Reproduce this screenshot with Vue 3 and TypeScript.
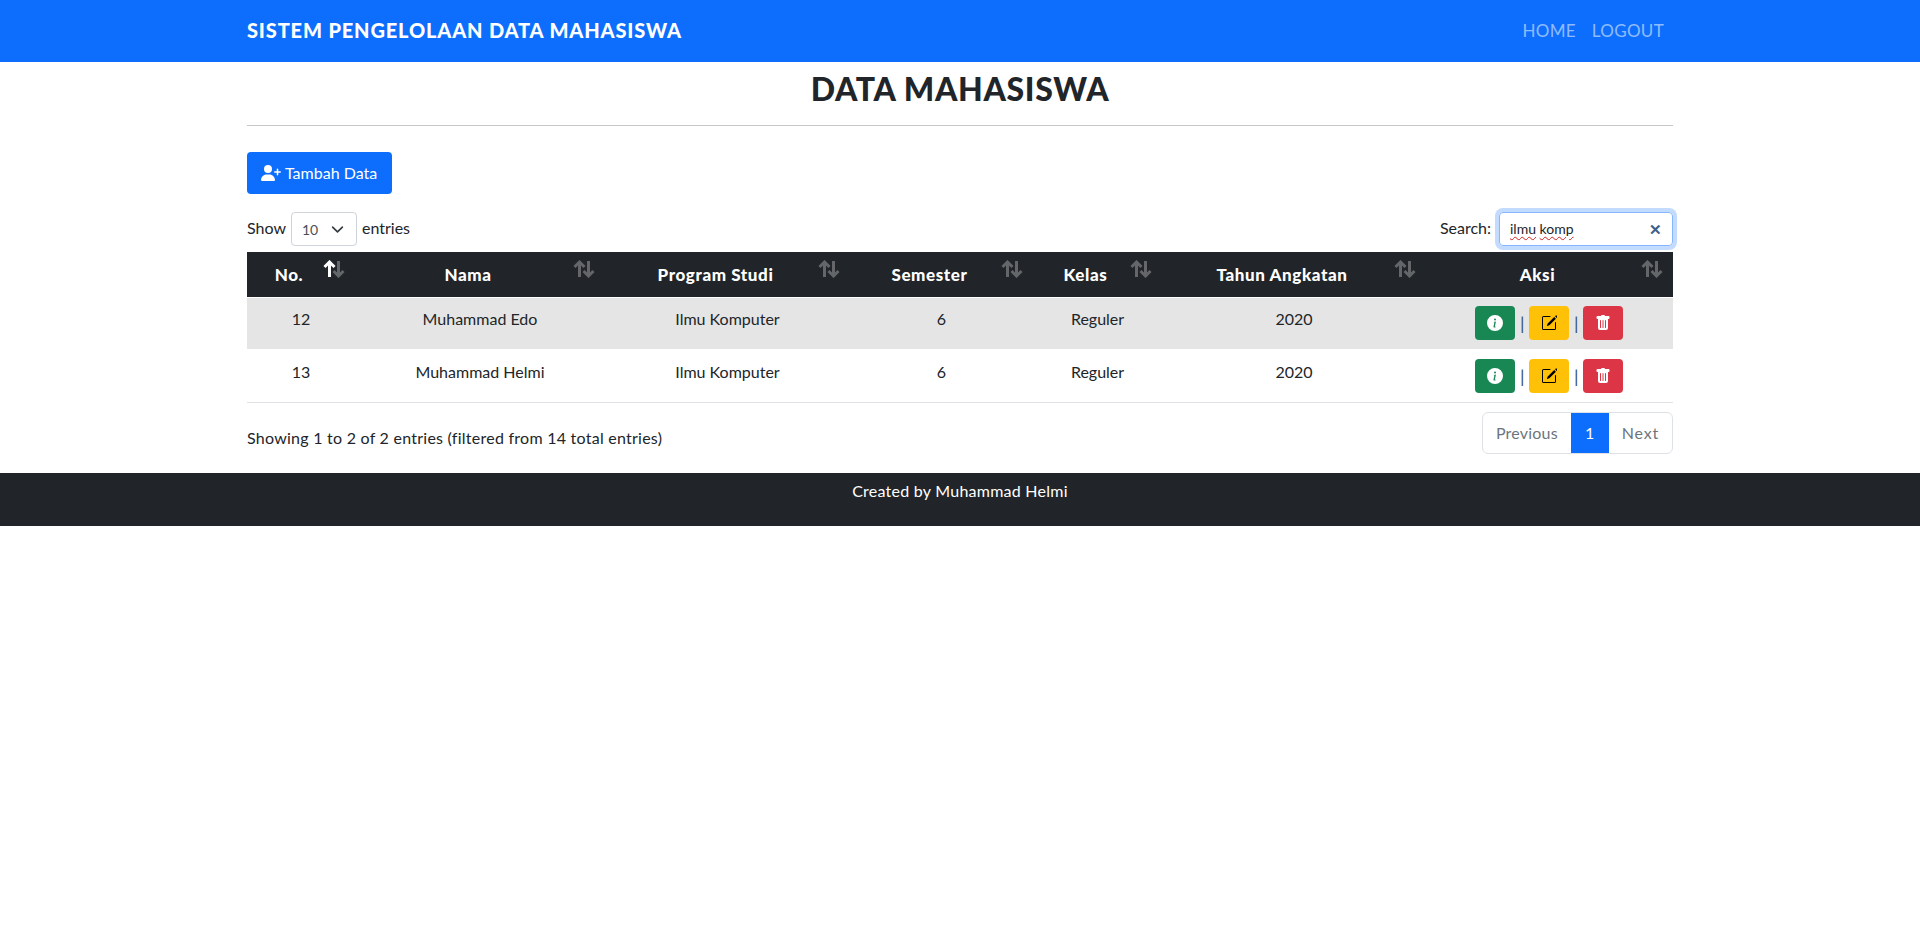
<template>
  <div class="page">
    <nav class="navbar">
      <div class="nav-inner">
        <a class="brand">SISTEM PENGELOLAAN DATA MAHASISWA</a>
        <div class="nav-links">
          <a v-for="link in navLinks" :key="link">{{ link }}</a>
        </div>
      </div>
    </nav>

    <main class="content">
      <h2 class="title">DATA MAHASISWA</h2>
      <hr class="rule" />

      <button class="btn-add">
        <svg class="add-icon" viewBox="0 0 640 512" fill="currentColor">
          <path d="M224 256a128 128 0 1 0 0-256 128 128 0 0 0 0 256zm-45.7 48C79.8 304 0 383.8 0 482.3 0 498.7 13.3 512 29.7 512h388.6c16.4 0 29.7-13.3 29.7-29.7C448 383.8 368.2 304 269.7 304h-91.4zM504 312v-64h-64c-13.3 0-24-10.7-24-24s10.7-24 24-24h64v-64c0-13.3 10.7-24 24-24s24 10.7 24 24v64h64c13.3 0 24 10.7 24 24s-10.7 24-24 24h-64v64c0 13.3-10.7 24-24 24s-24-10.7-24-24z" />
        </svg>
        <span class="btn-text">Tambah Data</span>
      </button>

      <div class="table-top">
        <div class="length">
          <span class="label">Show</span>
          <div class="select">
            <span>10</span>
            <svg viewBox="0 0 16 16" class="chevron"><path d="M2 5l6 6 6-6" fill="none" stroke="#343a40" stroke-width="2" stroke-linecap="round" stroke-linejoin="round" /></svg>
          </div>
          <span class="label">entries</span>
        </div>
        <div class="search">
          <span class="label">Search:</span>
          <div class="search-box">
            <span class="typed"><span class="squiggle">ilmu</span> <span class="squiggle">komp</span></span>
            <span class="clear">✕</span>
          </div>
        </div>
      </div>

      <table class="data-table">
        <colgroup>
          <col v-for="col in columns" :key="col.label" :style="{ width: col.width + 'px' }" />
        </colgroup>
        <thead>
          <tr>
            <th v-for="(col, i) in columns" :key="col.label">
              {{ col.label }}
              <svg class="sort" viewBox="0 0 24 18">
                <path class="up" :class="{ on: i === 0 }" d="M7.5 17V2M2.5 7l5-5 5 5" />
                <path class="down" d="M16.5 1v15M11.5 11l5 5 5-5" />
              </svg>
            </th>
          </tr>
        </thead>
        <tbody>
          <tr v-for="row in rows" :key="row.no">
            <td>{{ row.no }}</td>
            <td>{{ row.nama }}</td>
            <td>{{ row.prodi }}</td>
            <td>{{ row.semester }}</td>
            <td>{{ row.kelas }}</td>
            <td>{{ row.tahun }}</td>
            <td>
              <div class="actions">
                <button class="act green">
                  <svg viewBox="0 0 16 16" fill="currentColor"><path d="M8 16A8 8 0 1 0 8 0a8 8 0 0 0 0 16zm.93-9.41-1 4.7c-.07.34.03.53.3.53.2 0 .49-.07.69-.25l-.09.42c-.29.35-.92.6-1.46.6-.7 0-1-.42-.8-1.3l.74-3.47c.06-.3 0-.4-.3-.47l-.45-.08.08-.38 2.29-.3zM8 5.5a1 1 0 1 1 0-2 1 1 0 0 1 0 2z" /></svg>
                </button>
                <span class="sep">|</span>
                <button class="act yellow">
                  <svg viewBox="0 0 16 16" fill="currentColor"><path d="M15.5.5a.5.5 0 0 0-.7 0l-.8.8 1.7 1.7.8-.8a.5.5 0 0 0 0-.7l-1-1zM14.9 3.7l-1.7-1.7-6.5 6.5a.5.5 0 0 0-.1.2l-.6 1.9c-.1.2.1.4.3.3l1.9-.6a.5.5 0 0 0 .2-.1l6.5-6.5z" /><path d="M1 13.5A1.5 1.5 0 0 0 2.5 15h11a1.5 1.5 0 0 0 1.5-1.5v-6a.5.5 0 0 0-1 0v6a.5.5 0 0 1-.5.5h-11a.5.5 0 0 1-.5-.5v-11a.5.5 0 0 1 .5-.5H9a.5.5 0 0 0 0-1H2.5A1.5 1.5 0 0 0 1 2.5v11z" /></svg>
                </button>
                <span class="sep">|</span>
                <button class="act red">
                  <svg viewBox="0 0 16 16" fill="currentColor"><path d="M2.5 1a1 1 0 0 0-1 1v1a1 1 0 0 0 1 1H3v9a2 2 0 0 0 2 2h6a2 2 0 0 0 2-2V4h.5a1 1 0 0 0 1-1V2a1 1 0 0 0-1-1H10a1 1 0 0 0-1-1H7a1 1 0 0 0-1 1H2.5zm3 4a.5.5 0 0 1 .5.5v7a.5.5 0 0 1-1 0v-7a.5.5 0 0 1 .5-.5zM8 5a.5.5 0 0 1 .5.5v7a.5.5 0 0 1-1 0v-7A.5.5 0 0 1 8 5zm3 .5v7a.5.5 0 0 1-1 0v-7a.5.5 0 0 1 1 0z" /></svg>
                </button>
              </div>
            </td>
          </tr>
        </tbody>
      </table>

      <div class="table-bottom">
        <div class="info">Showing 1 to 2 of 2 entries (filtered from 14 total entries)</div>
        <div class="pagination">
          <a class="page-link">Previous</a>
          <a class="page-link active">1</a>
          <a class="page-link">Next</a>
        </div>
      </div>
    </main>

    <footer class="footer">Created by Muhammad Helmi</footer>
  </div>
</template>

<script setup lang="ts">
interface Mahasiswa {
  no: number
  nama: string
  prodi: string
  semester: number
  kelas: string
  tahun: number
}

const navLinks = ['HOME', 'LOGOUT']

const columns = [
  { label: 'No.', width: 108 },
  { label: 'Nama', width: 250 },
  { label: 'Program Studi', width: 245 },
  { label: 'Semester', width: 183 },
  { label: 'Kelas', width: 129 },
  { label: 'Tahun Angkatan', width: 264 },
  { label: 'Aksi', width: 247 },
]

const rows: Mahasiswa[] = [
  { no: 12, nama: 'Muhammad Edo', prodi: 'Ilmu Komputer', semester: 6, kelas: 'Reguler', tahun: 2020 },
  { no: 13, nama: 'Muhammad Helmi', prodi: 'Ilmu Komputer', semester: 6, kelas: 'Reguler', tahun: 2020 },
]
</script>

<style>
html,
body {
  margin: 0;
  background: #fff;
}
</style>

<style scoped>
.page {
  font-family: Lato, "Liberation Sans", sans-serif;
  font-size: 16px;
  color: #212529;
}
.navbar {
  height: 62px;
  background: #0d6efd;
}
.nav-inner {
  box-sizing: border-box;
  width: 1426px;
  height: 100%;
  margin: 0 auto;
  padding-bottom: 2px;
  display: flex;
  align-items: center;
  justify-content: space-between;
}
.brand {
  font-size: 20px;
  font-weight: 900;
  color: #fff;
  letter-spacing: 0.85px;
}
.nav-links {
  display: flex;
  gap: 16px;
  padding-right: 9px;
  font-size: 17px;
  letter-spacing: 0.3px;
  color: rgba(255, 255, 255, 0.55);
}
.content {
  width: 1426px;
  margin: 0 auto;
  padding-bottom: 19px;
}
.title {
  margin: 0;
  padding-top: 8px;
  height: 55px;
  box-sizing: content-box;
  text-align: center;
  font-size: 32px;
  line-height: 38px;
  font-weight: 900;
  letter-spacing: 0.65px;
}
.rule {
  margin: 0;
  border: 0;
  height: 1px;
  background: #c8c8c8;
}
.btn-add {
  display: flex;
  align-items: center;
  gap: 4px;
  height: 42px;
  margin-top: 26px;
  padding: 0 15px 0 14px;
  border: 0;
  border-radius: 4px;
  background: #0d6efd;
  color: #fff;
  font: inherit;
}
.btn-text {
  margin-bottom: 2px;
}
.add-icon {
  width: 20px;
  height: 16px;
}
.table-top {
  display: flex;
  justify-content: space-between;
  align-items: center;
  height: 34px;
  margin-top: 18px;
  margin-bottom: 6px;
}
.length,
.search {
  display: flex;
  align-items: center;
  gap: 5px;
}
.label {
  margin-bottom: 3px;
}
.select {
  box-sizing: border-box;
  width: 66px;
  height: 34px;
  padding: 0 12px 0 10px;
  display: flex;
  align-items: center;
  justify-content: space-between;
  border: 1px solid #ced4da;
  border-radius: 4px;
  font-size: 14px;
  color: #495057;
}
.chevron {
  width: 13px;
  height: 13px;
}
.search {
  gap: 8px;
}
.search-box {
  box-sizing: border-box;
  width: 174px;
  height: 34px;
  padding: 0 10px;
  display: flex;
  align-items: center;
  justify-content: space-between;
  border: 1px solid #86b7fe;
  border-radius: 4px;
  box-shadow: 0 0 0 4px rgba(13, 110, 253, 0.25);
}
.squiggle {
  text-decoration: underline wavy #d02020 1px;
  text-underline-offset: 2px;
}
.typed {
  font-size: 14px;
  margin-bottom: 2px;
}
.clear {
  font-size: 15px;
  font-weight: 700;
  color: #3e5f8a;
}
.data-table {
  width: 1426px;
  table-layout: fixed;
  border-collapse: collapse;
}
th {
  position: relative;
  height: 45px;
  padding: 8px 32px 8px 8px;
  background: #212529;
  color: #fff;
  font-size: 17px;
  font-weight: 900;
  letter-spacing: 0.6px;
  text-align: center;
  border-bottom: 1px solid #fff;
  box-sizing: border-box;
}
.sort {
  position: absolute;
  top: 8px;
  right: 9px;
  width: 24px;
  height: 18px;
}
.sort path {
  fill: none;
  stroke: #fff;
  stroke-width: 3;
  opacity: 0.3;
}
.sort path.on {
  opacity: 1;
}
td {
  height: 52px;
  padding: 8px;
  text-align: center;
  box-sizing: border-box;
  vertical-align: top;
  line-height: 26px;
  color: #212529;
}
tbody tr:nth-child(odd) td {
  background: #e5e5e5;
}
tbody tr:last-child td {
  height: 53px;
  padding-top: 10px;
  border-bottom: 1px solid #dee2e6;
}
.actions {
  display: flex;
  justify-content: center;
  align-items: center;
  gap: 5px;
  margin-right: 1px;
}
.sep {
  width: 4px;
  font-size: 18px;
  color: #34506b;
  line-height: 1;
}
.act {
  width: 40px;
  height: 34px;
  border: 0;
  padding: 0;
  border-radius: 4px;
  display: flex;
  align-items: center;
  justify-content: center;
}
.act svg {
  width: 16px;
  height: 16px;
}
.green {
  background: #198754;
  color: #fff;
}
.yellow {
  background: #ffc107;
  color: #000;
}
.red {
  background: #dc3545;
  color: #fff;
}
.table-bottom {
  display: flex;
  justify-content: space-between;
  align-items: center;
  margin-top: 9px;
}
.info {
  padding-top: 10px;
  letter-spacing: 0.25px;
}
.pagination {
  display: flex;
  height: 42px;
  box-sizing: border-box;
  border: 1px solid #dee2e6;
  border-radius: 6px;
  overflow: hidden;
  letter-spacing: 0.2px;
}
.page-link {
  display: flex;
  align-items: center;
  padding: 0 13px;
  color: #6c757d;
}
.page-link:last-child {
  letter-spacing: 0.8px;
}
.page-link.active {
  width: 38px;
  box-sizing: border-box;
  padding: 0;
  justify-content: center;
  background: #0d6efd;
  color: #fff;
}
.footer {
  height: 53px;
  padding-top: 8px;
  box-sizing: border-box;
  background: #212529;
  color: #fff;
  letter-spacing: 0.25px;
  text-align: center;
}
</style>
